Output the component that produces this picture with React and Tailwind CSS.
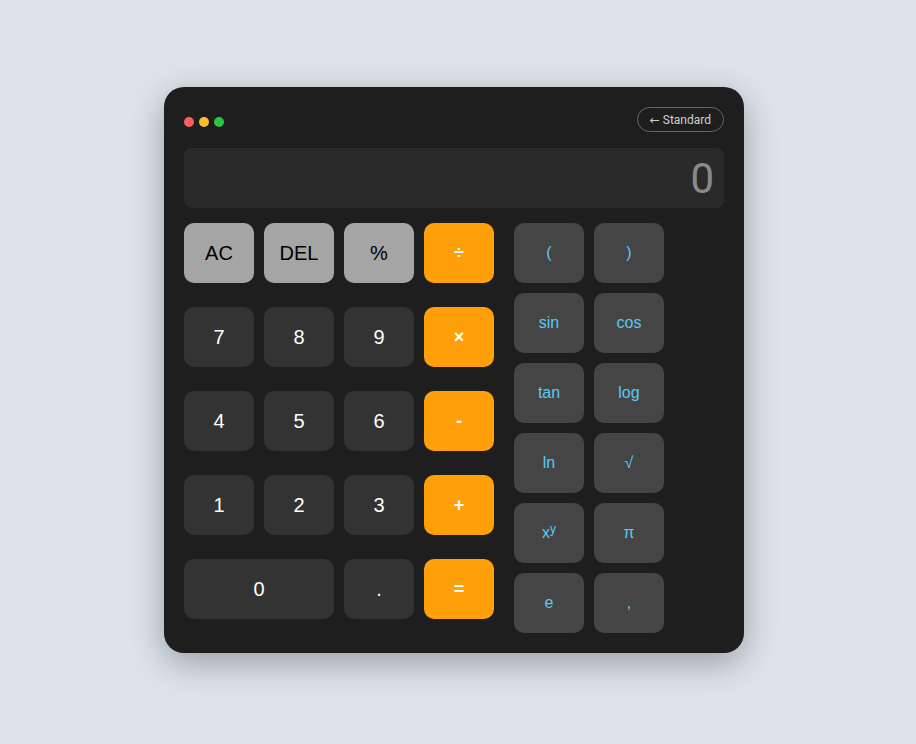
const mainKeys = [
  { label: 'AC', kind: 'fn' },
  { label: 'DEL', kind: 'fn' },
  { label: '%', kind: 'fn' },
  { label: '÷', kind: 'op' },
  { label: '7' },
  { label: '8' },
  { label: '9' },
  { label: '×', kind: 'op' },
  { label: '4' },
  { label: '5' },
  { label: '6' },
  { label: '-', kind: 'op' },
  { label: '1' },
  { label: '2' },
  { label: '3' },
  { label: '+', kind: 'op' },
  { label: '0', wide: true },
  { label: '.' },
  { label: '=', kind: 'op' },
]

const sciKeys = ['(', ')', 'sin', 'cos', 'tan', 'log', 'ln', '√', 'xy', 'π', 'e', ',']

function Key({ label, kind, wide }) {
  const tone =
    kind === 'fn'
      ? 'bg-[#a5a5a5] text-black text-[20px]'
      : kind === 'op'
        ? 'bg-[#ff9f0a] text-white text-[18px] font-bold'
        : 'bg-[#333333] text-white text-[20px]'
  return (
    <button
      className={`${wide ? 'col-span-2' : ''} h-[60px] rounded-[10px] flex items-center justify-center ${tone}`}
    >
      {label}
    </button>
  )
}

function SciKey({ label }) {
  return (
    <button className="w-[70px] h-[60px] rounded-[10px] bg-[#454545] text-[#5ac8fa] text-[16px] flex items-center justify-center">
      {label === 'xy' ? (
        <span>
          x<sup className="text-[12px] -top-[5px]">y</sup>
        </span>
      ) : (
        label
      )}
    </button>
  )
}

export default function App() {
  return (
    <div className="min-h-screen bg-[#dce3eb] flex items-center justify-center pr-2 pb-1 font-['Liberation_Sans',Arial,sans-serif]">
      <div className="w-[580px] bg-[#1e1e1e] rounded-[20px] p-5 shadow-[0_10px_35px_rgba(0,0,0,0.3)]">
        <div className="flex items-center justify-between h-[25px]">
          <div className="flex gap-[5px] mt-[5px]">
            <span className="w-[10px] h-[10px] rounded-full bg-[#ff5f57]" />
            <span className="w-[10px] h-[10px] rounded-full bg-[#febc2e]" />
            <span className="w-[10px] h-[10px] rounded-full bg-[#28c840]" />
          </div>
          <button className="h-[25px] px-3 rounded-full border border-[#666] text-[#cfcfcf] text-[12px] font-['Roboto',sans-serif] flex items-center gap-[3px]">
            <span className="font-['DejaVu_Sans',sans-serif] text-[12px] leading-none">←</span>
            Standard
          </button>
        </div>
        <div className="mt-4 h-[60px] rounded-[8px] bg-[#2a2a2a] flex items-center justify-end pr-[10px] text-[42px] text-[#8a8a8a] font-['Roboto',sans-serif]">
          0
        </div>
        <div className="mt-[15px] flex gap-5">
          <div className="grid grid-cols-[repeat(4,70px)] gap-x-[10px] gap-y-[24px] content-start">
            {mainKeys.map((k) => (
              <Key key={k.label} {...k} />
            ))}
          </div>
          <div className="grid grid-cols-[repeat(2,70px)] gap-[10px] content-start">
            {sciKeys.map((k) => (
              <SciKey key={k} label={k} />
            ))}
          </div>
        </div>
      </div>
    </div>
  )
}
